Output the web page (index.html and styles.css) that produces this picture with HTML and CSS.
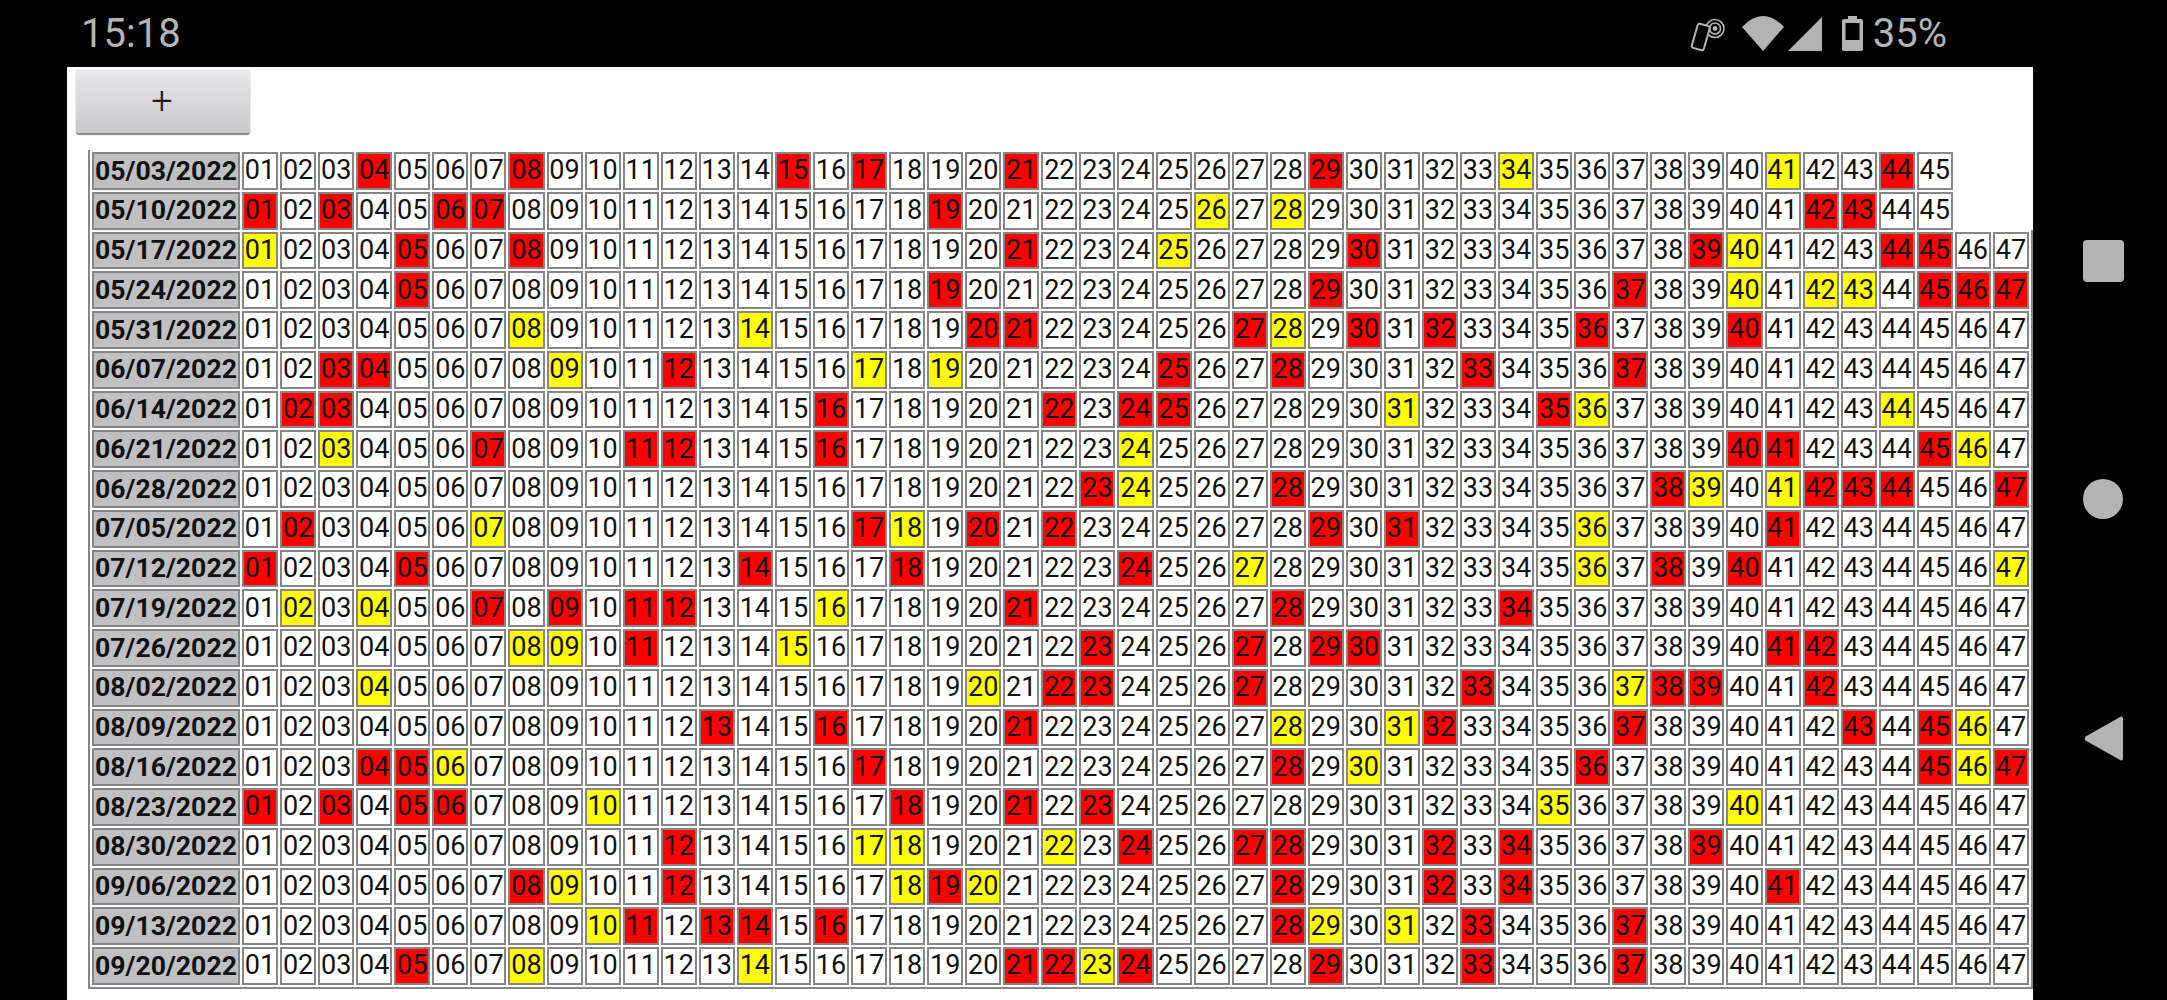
FILE: index.html
```html
<!DOCTYPE html>
<html lang="en">
<head>
<meta charset="utf-8">
<title>Draw history</title>
<link rel="stylesheet" href="styles.css">
</head>
<body>
<header class="status">
<span class="clock">15:18</span>
<svg class="ico ico-nfc" width="35" height="36" viewBox="0 0 35 36"><circle cx="25" cy="12.500" r="9" fill="none" stroke="#b4b4b4" stroke-width="1.6"/><circle cx="25" cy="12.500" r="5.500" fill="none" stroke="#b4b4b4" stroke-width="1.6"/><circle cx="25" cy="12.500" r="2.400" fill="#b4b4b4"/><rect x="4.500" y="8.500" width="12.500" height="25" rx="2" transform="rotate(16 10.750 21)" fill="#000" stroke="#b4b4b4" stroke-width="2"/></svg>
<svg class="ico ico-wifi" width="42" height="35" viewBox="0 0 42 35"><path d="M0 11Q21-11 42 11L21 35Z" fill="#b4b4b4"/></svg>
<svg class="ico ico-signal" width="34" height="34" viewBox="0 0 34 34"><path d="M0 34H34V0Z" fill="#b4b4b4"/></svg>
<svg class="ico ico-batt" width="21" height="35" viewBox="0 0 21 35"><path fill-rule="evenodd" d="M6 0H15V3H19Q21 3 21 5V33Q21 35 19 35H2Q0 35 0 33V5Q0 3 2 3H6ZM3.500 7V24H17.500V7Z" fill="#b4b4b4"/></svg>
<span class="pct">35%</span>
</header>
<div class="stage">
<main class="panel">
<button class="add" type="button">+</button>
<table class="grid">
<col class="c-date">
<tr><th>05/03/2022<td>01<td>02<td>03<td class=r>04<td>05<td>06<td>07<td class=r>08<td>09<td>10<td>11<td>12<td>13<td>14<td class=r>15<td>16<td class=r>17<td>18<td>19<td>20<td class=r>21<td>22<td>23<td>24<td>25<td>26<td>27<td>28<td class=r>29<td>30<td>31<td>32<td>33<td class=y>34<td>35<td>36<td>37<td>38<td>39<td>40<td class=y>41<td>42<td>43<td class=r>44<td>45
<tr><th>05/10/2022<td class=r>01<td>02<td class=r>03<td>04<td>05<td class=r>06<td class=r>07<td>08<td>09<td>10<td>11<td>12<td>13<td>14<td>15<td>16<td>17<td>18<td class=r>19<td>20<td>21<td>22<td>23<td>24<td>25<td class=y>26<td>27<td class=y>28<td>29<td>30<td>31<td>32<td>33<td>34<td>35<td>36<td>37<td>38<td>39<td>40<td>41<td class=r>42<td class=r>43<td>44<td>45
<tr><th>05/17/2022<td class=y>01<td>02<td>03<td>04<td class=r>05<td>06<td>07<td class=r>08<td>09<td>10<td>11<td>12<td>13<td>14<td>15<td>16<td>17<td>18<td>19<td>20<td class=r>21<td>22<td>23<td>24<td class=y>25<td>26<td>27<td>28<td>29<td class=r>30<td>31<td>32<td>33<td>34<td>35<td>36<td>37<td>38<td class=r>39<td class=y>40<td>41<td>42<td>43<td class=r>44<td class=r>45<td>46<td>47
<tr><th>05/24/2022<td>01<td>02<td>03<td>04<td class=r>05<td>06<td>07<td>08<td>09<td>10<td>11<td>12<td>13<td>14<td>15<td>16<td>17<td>18<td class=r>19<td>20<td>21<td>22<td>23<td>24<td>25<td>26<td>27<td>28<td class=r>29<td>30<td>31<td>32<td>33<td>34<td>35<td>36<td class=r>37<td>38<td>39<td class=y>40<td>41<td class=y>42<td class=y>43<td>44<td class=r>45<td class=r>46<td class=r>47
<tr><th>05/31/2022<td>01<td>02<td>03<td>04<td>05<td>06<td>07<td class=y>08<td>09<td>10<td>11<td>12<td>13<td class=y>14<td>15<td>16<td>17<td>18<td>19<td class=r>20<td class=r>21<td>22<td>23<td>24<td>25<td>26<td class=r>27<td class=y>28<td>29<td class=r>30<td>31<td class=r>32<td>33<td>34<td>35<td class=r>36<td>37<td>38<td>39<td class=r>40<td>41<td>42<td>43<td>44<td>45<td>46<td>47
<tr><th>06/07/2022<td>01<td>02<td class=r>03<td class=r>04<td>05<td>06<td>07<td>08<td class=y>09<td>10<td>11<td class=r>12<td>13<td>14<td>15<td>16<td class=y>17<td>18<td class=y>19<td>20<td>21<td>22<td>23<td>24<td class=r>25<td>26<td>27<td class=r>28<td>29<td>30<td>31<td>32<td class=r>33<td>34<td>35<td>36<td class=r>37<td>38<td>39<td>40<td>41<td>42<td>43<td>44<td>45<td>46<td>47
<tr><th>06/14/2022<td>01<td class=r>02<td class=r>03<td>04<td>05<td>06<td>07<td>08<td>09<td>10<td>11<td>12<td>13<td>14<td>15<td class=r>16<td>17<td>18<td>19<td>20<td>21<td class=r>22<td>23<td class=r>24<td class=r>25<td>26<td>27<td>28<td>29<td>30<td class=y>31<td>32<td>33<td>34<td class=r>35<td class=y>36<td>37<td>38<td>39<td>40<td>41<td>42<td>43<td class=y>44<td>45<td>46<td>47
<tr><th>06/21/2022<td>01<td>02<td class=y>03<td>04<td>05<td>06<td class=r>07<td>08<td>09<td>10<td class=r>11<td class=r>12<td>13<td>14<td>15<td class=r>16<td>17<td>18<td>19<td>20<td>21<td>22<td>23<td class=y>24<td>25<td>26<td>27<td>28<td>29<td>30<td>31<td>32<td>33<td>34<td>35<td>36<td>37<td>38<td>39<td class=r>40<td class=r>41<td>42<td>43<td>44<td class=r>45<td class=y>46<td>47
<tr><th>06/28/2022<td>01<td>02<td>03<td>04<td>05<td>06<td>07<td>08<td>09<td>10<td>11<td>12<td>13<td>14<td>15<td>16<td>17<td>18<td>19<td>20<td>21<td>22<td class=r>23<td class=y>24<td>25<td>26<td>27<td class=r>28<td>29<td>30<td>31<td>32<td>33<td>34<td>35<td>36<td>37<td class=r>38<td class=y>39<td>40<td class=y>41<td class=r>42<td class=r>43<td class=r>44<td>45<td>46<td class=r>47
<tr><th>07/05/2022<td>01<td class=r>02<td>03<td>04<td>05<td>06<td class=y>07<td>08<td>09<td>10<td>11<td>12<td>13<td>14<td>15<td>16<td class=r>17<td class=y>18<td>19<td class=r>20<td>21<td class=r>22<td>23<td>24<td>25<td>26<td>27<td>28<td class=r>29<td>30<td class=r>31<td>32<td>33<td>34<td>35<td class=y>36<td>37<td>38<td>39<td>40<td class=r>41<td>42<td>43<td>44<td>45<td>46<td>47
<tr><th>07/12/2022<td class=r>01<td>02<td>03<td>04<td class=r>05<td>06<td>07<td>08<td>09<td>10<td>11<td>12<td>13<td class=r>14<td>15<td>16<td>17<td class=r>18<td>19<td>20<td>21<td>22<td>23<td class=r>24<td>25<td>26<td class=y>27<td>28<td>29<td>30<td>31<td>32<td>33<td>34<td>35<td class=y>36<td>37<td class=r>38<td>39<td class=r>40<td>41<td>42<td>43<td>44<td>45<td>46<td class=y>47
<tr><th>07/19/2022<td>01<td class=y>02<td>03<td class=y>04<td>05<td>06<td class=r>07<td>08<td class=r>09<td>10<td class=r>11<td class=r>12<td>13<td>14<td>15<td class=y>16<td>17<td>18<td>19<td>20<td class=r>21<td>22<td>23<td>24<td>25<td>26<td>27<td class=r>28<td>29<td>30<td>31<td>32<td>33<td class=r>34<td>35<td>36<td>37<td>38<td>39<td>40<td>41<td>42<td>43<td>44<td>45<td>46<td>47
<tr><th>07/26/2022<td>01<td>02<td>03<td>04<td>05<td>06<td>07<td class=y>08<td class=y>09<td>10<td class=r>11<td>12<td>13<td>14<td class=y>15<td>16<td>17<td>18<td>19<td>20<td>21<td>22<td class=r>23<td>24<td>25<td>26<td class=r>27<td>28<td class=r>29<td class=r>30<td>31<td>32<td>33<td>34<td>35<td>36<td>37<td>38<td>39<td>40<td class=r>41<td class=r>42<td>43<td>44<td>45<td>46<td>47
<tr><th>08/02/2022<td>01<td>02<td>03<td class=y>04<td>05<td>06<td>07<td>08<td>09<td>10<td>11<td>12<td>13<td>14<td>15<td>16<td>17<td>18<td>19<td class=y>20<td>21<td class=r>22<td class=r>23<td>24<td>25<td>26<td class=r>27<td>28<td>29<td>30<td>31<td>32<td class=r>33<td>34<td>35<td>36<td class=y>37<td class=r>38<td class=r>39<td>40<td>41<td class=r>42<td>43<td>44<td>45<td>46<td>47
<tr><th>08/09/2022<td>01<td>02<td>03<td>04<td>05<td>06<td>07<td>08<td>09<td>10<td>11<td>12<td class=r>13<td>14<td>15<td class=r>16<td>17<td>18<td>19<td>20<td class=r>21<td>22<td>23<td>24<td>25<td>26<td>27<td class=y>28<td>29<td>30<td class=y>31<td class=r>32<td>33<td>34<td>35<td>36<td class=r>37<td>38<td>39<td>40<td>41<td>42<td class=r>43<td>44<td class=r>45<td class=y>46<td>47
<tr><th>08/16/2022<td>01<td>02<td>03<td class=r>04<td class=r>05<td class=y>06<td>07<td>08<td>09<td>10<td>11<td>12<td>13<td>14<td>15<td>16<td class=r>17<td>18<td>19<td>20<td>21<td>22<td>23<td>24<td>25<td>26<td>27<td class=r>28<td>29<td class=y>30<td>31<td>32<td>33<td>34<td>35<td class=r>36<td>37<td>38<td>39<td>40<td>41<td>42<td>43<td>44<td class=r>45<td class=y>46<td class=r>47
<tr><th>08/23/2022<td class=r>01<td>02<td class=r>03<td>04<td class=r>05<td class=r>06<td>07<td>08<td>09<td class=y>10<td>11<td>12<td>13<td>14<td>15<td>16<td>17<td class=r>18<td>19<td>20<td class=r>21<td>22<td class=r>23<td>24<td>25<td>26<td>27<td>28<td>29<td>30<td>31<td>32<td>33<td>34<td class=y>35<td>36<td>37<td>38<td>39<td class=y>40<td>41<td>42<td>43<td>44<td>45<td>46<td>47
<tr><th>08/30/2022<td>01<td>02<td>03<td>04<td>05<td>06<td>07<td>08<td>09<td>10<td>11<td class=r>12<td>13<td>14<td>15<td>16<td class=y>17<td class=y>18<td>19<td>20<td>21<td class=y>22<td>23<td class=r>24<td>25<td>26<td class=r>27<td class=r>28<td>29<td>30<td>31<td class=r>32<td>33<td class=r>34<td>35<td>36<td>37<td>38<td class=r>39<td>40<td>41<td>42<td>43<td>44<td>45<td>46<td>47
<tr><th>09/06/2022<td>01<td>02<td>03<td>04<td>05<td>06<td>07<td class=r>08<td class=y>09<td>10<td>11<td class=r>12<td>13<td>14<td>15<td>16<td>17<td class=y>18<td class=r>19<td class=y>20<td>21<td>22<td>23<td>24<td>25<td>26<td>27<td class=r>28<td>29<td>30<td>31<td class=r>32<td>33<td class=r>34<td>35<td>36<td>37<td>38<td>39<td>40<td class=r>41<td>42<td>43<td>44<td>45<td>46<td>47
<tr><th>09/13/2022<td>01<td>02<td>03<td>04<td>05<td>06<td>07<td>08<td>09<td class=y>10<td class=r>11<td>12<td class=r>13<td class=r>14<td>15<td class=r>16<td>17<td>18<td>19<td>20<td>21<td>22<td>23<td>24<td>25<td>26<td>27<td class=r>28<td class=y>29<td>30<td class=y>31<td>32<td class=r>33<td>34<td>35<td>36<td class=r>37<td>38<td>39<td>40<td>41<td>42<td>43<td>44<td>45<td>46<td>47
<tr><th>09/20/2022<td>01<td>02<td>03<td>04<td class=r>05<td>06<td>07<td class=y>08<td>09<td>10<td>11<td>12<td>13<td class=y>14<td>15<td>16<td>17<td>18<td>19<td>20<td class=r>21<td class=r>22<td class=y>23<td class=r>24<td>25<td>26<td>27<td>28<td class=r>29<td>30<td>31<td>32<td class=r>33<td>34<td>35<td>36<td class=r>37<td>38<td>39<td>40<td>41<td>42<td>43<td>44<td>45<td>46<td>47
</table>
</main>
<nav class="rail">
<span class="nav-recent"></span>
<span class="nav-home"></span>
<svg class="nav-back" width="39" height="45" viewBox="0 0 39 45"><path d="M37 0.500Q39 0 39 2.500V42.500Q39 45 37 44.500L1.500 24.500Q0 22.500 1.500 20.500Z" fill="#b4b4b4"/></svg>
</nav>
</div>
</body>
</html>
```
FILE: styles.css
```css
html, body { margin: 0; height: 100%; }
body {
  width: 2167px;
  height: 1000px;
  overflow: hidden;
  background: #000;
  font-family: Roboto, "Liberation Sans", sans-serif;
  display: flex;
  flex-direction: column;
}
.status {
  height: 67px;
  flex: none;
  display: flex;
  align-items: center;
  padding: 0 220px 0 81px;
  color: #b4b4b4;
  font-size: 40px;
}
.clock { margin-right: auto; }
.ico { flex: none; }
.ico-nfc { margin-right: 17px; }
.ico-wifi { margin-right: 4px; }
.ico-signal { margin-right: 20px; }
.ico-batt { margin-right: 10px; }

.stage { flex: 1; display: flex; min-height: 0; }
.panel {
  width: 1966px;
  margin-left: 67px;
  background: #fff;
  overflow: hidden;
  display: flex;
  flex-direction: column;
  align-items: flex-start;
}
.add {
  width: 174px;
  height: 63px;
  margin: 3px 0 0 9px;
  padding: 0 2px 2px 0;
  border: 0;
  border-radius: 3px;
  background: linear-gradient(#e8e7e9, #c8c7c9);
  box-shadow: 0 2px 1px #858585, 0 0 1px #9a9a9a;
  color: #1c1c1c;
  font-family: Roboto, sans-serif;
  font-size: 38px;
  font-weight: 300;
  line-height: 1;
}
.grid {
  flex: none;
  box-sizing: border-box;
  width: 1945px;
  margin: 17px 0 0 21px;
  table-layout: fixed;
  border-collapse: separate;
  border-spacing: 2px;
  border-left: 2px solid #868686;
  border-bottom: 2px solid #868686;
  padding-right: 2px;
  background: linear-gradient(#868686, #868686) no-repeat right bottom / 2px calc(100% - 80px);
  color: #111;
}
.c-date { width: 148px; }
.grid th, .grid td {
  box-sizing: border-box;
  height: 37.75px;
  padding: 0;
  border: 2px solid #868686;
  text-align: center;
  vertical-align: middle;
  line-height: 1;
  font-size: 27px;
  white-space: nowrap;
}
.grid th { background: #c0bfc2; font-weight: 700; font-size: 26.6px; }
.grid td { font-weight: 400; }
.grid .r { background: #f00; }
.grid .y { background: #ff0; }

.rail {
  flex: none;
  box-sizing: border-box;
  width: 134px;
  display: flex;
  flex-direction: column;
  align-items: center;
  padding: 173px 0 0 6px;
  gap: 197px;
}
.nav-recent {
  width: 41px;
  height: 42px;
  border-radius: 4px;
  background: #b4b4b4;
}
.nav-home {
  width: 40px;
  height: 40px;
  border-radius: 50%;
  background: #b4b4b4;
}
.nav-back { flex: none; }
```
